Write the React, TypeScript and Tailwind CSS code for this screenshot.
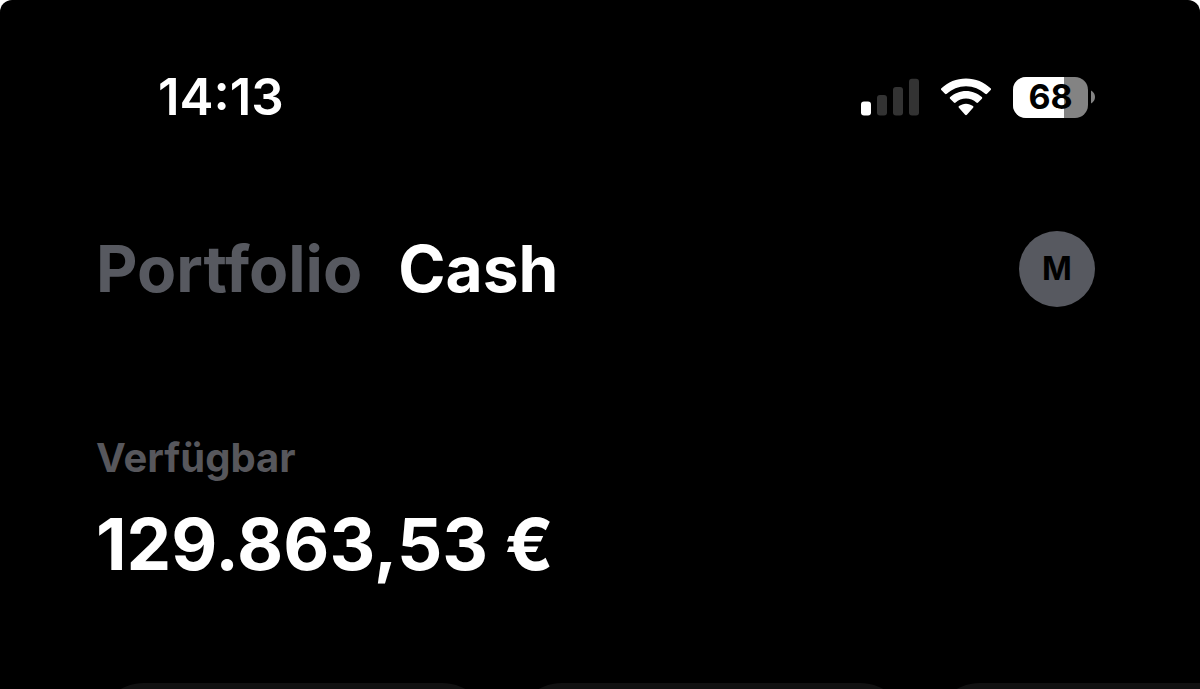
const actions = ["deposit", "withdraw", "transfer"];

function SignalIcon() {
  return (
    <svg viewBox="0 0 58 38" className="h-[38px] w-[58px]" aria-hidden="true">
      <rect x="0" y="23.500" width="10" height="14" rx="3" fill="#fff" />
      <rect x="16" y="17" width="10" height="20.500" rx="3" fill="#333" />
      <rect x="32" y="9" width="10" height="28.500" rx="3" fill="#333" />
      <rect x="48" y="0.700" width="10" height="36.800" rx="3" fill="#333" />
    </svg>
  );
}

function WifiIcon() {
  return (
    <svg viewBox="0 0 50 38" className="h-[38px] w-[50px]" fill="#fff" aria-hidden="true">
      <path d="M25 0.500C34.500 0.500 43.200 4.200 49.600 10.300C50.200 10.900 50.200 11.500 49.700 12.100L46 15.800C45.500 16.400 44.800 16.400 44.200 15.800C39.200 11.100 32.400 8.200 25 8.200S10.800 11.100 5.800 15.800C5.200 16.400 4.500 16.400 4 15.800L0.300 12.100C-0.200 11.500-0.200 10.900 0.400 10.300C6.800 4.200 15.500 0.500 25 0.500Z" />
      <path d="M25 12.900C31 12.900 36.600 15.200 40.800 19C41.400 19.600 41.400 20.200 40.900 20.800L37.100 24.500C36.500 25.100 35.900 25 35.300 24.500C32.600 22.100 29 20.600 25 20.600S17.400 22.100 14.700 24.500C14.100 25 13.500 25.100 12.900 24.500L9.100 20.800C8.600 20.200 8.600 19.600 9.200 19C13.400 15.200 19 12.900 25 12.900Z" />
      <path d="M25 25.700C27.600 25.700 30.100 26.600 32 28.100C32.600 28.600 32.600 29.300 32.100 29.800L25.900 36.700C25.300 37.300 24.700 37.300 24.100 36.700L17.900 29.800C17.400 29.300 17.400 28.600 18 28.100C19.900 26.600 22.400 25.700 25 25.700Z" />
    </svg>
  );
}

function Battery({ level }: { level: number }) {
  return (
    <div className="flex items-center gap-[3px]">
      <div className="relative h-[41px] w-[75px] overflow-hidden rounded-[13px] bg-[#838383]">
        <div className="h-full bg-white" style={{ width: `${level}%` }} />
        <span className="absolute inset-0 flex items-center justify-center text-[34px] leading-none font-bold text-black">
          {level}
        </span>
      </div>
      <svg viewBox="0 0 4 14" className="h-[14px] w-[4px]" fill="#838383" aria-hidden="true">
        <path d="M0 0.500C2.600 1.800 4 4.200 4 7S2.600 12.200 0 13.500Z" />
      </svg>
    </div>
  );
}

export default function App() {
  return (
    <div className="h-screen overflow-hidden bg-white font-['Inter',sans-serif]">
      <div className="flex h-full flex-col rounded-t-xl bg-black text-white">
        <div className="flex items-center justify-between pt-[67px] pr-[105px] pl-[158px]">
          <time className="text-[51px] leading-[60px] font-semibold">14:13</time>
          <div className="flex items-center gap-[22px]">
            <SignalIcon />
            <WifiIcon />
            <Battery level={68} />
          </div>
        </div>

        <header className="mt-[102px] flex items-center justify-between pr-[105px] pl-24">
          <nav className="flex gap-9 text-[64px] leading-[80px] font-bold">
            <button className="text-[#575960]">Portfolio</button>
            <button>Cash</button>
          </nav>
          <button
            aria-label="Profile"
            className="flex size-[76px] items-center justify-center rounded-full bg-[#575960] text-[32px] leading-none font-bold text-black"
          >
            M
          </button>
        </header>

        <main className="mt-[124px] pl-24">
          <p className="text-[40px] leading-[50px] font-bold text-[#57575c]">Verfügbar</p>
          <p className="mt-[16px] text-[71px] leading-[90px] font-bold">129.863,53 €</p>
          <div className="mt-[94px] flex gap-6">
            {actions.map((action) => (
              <div key={action} className="h-24 w-[394px] flex-none rounded-full bg-[#111]" />
            ))}
          </div>
        </main>
      </div>
    </div>
  );
}
